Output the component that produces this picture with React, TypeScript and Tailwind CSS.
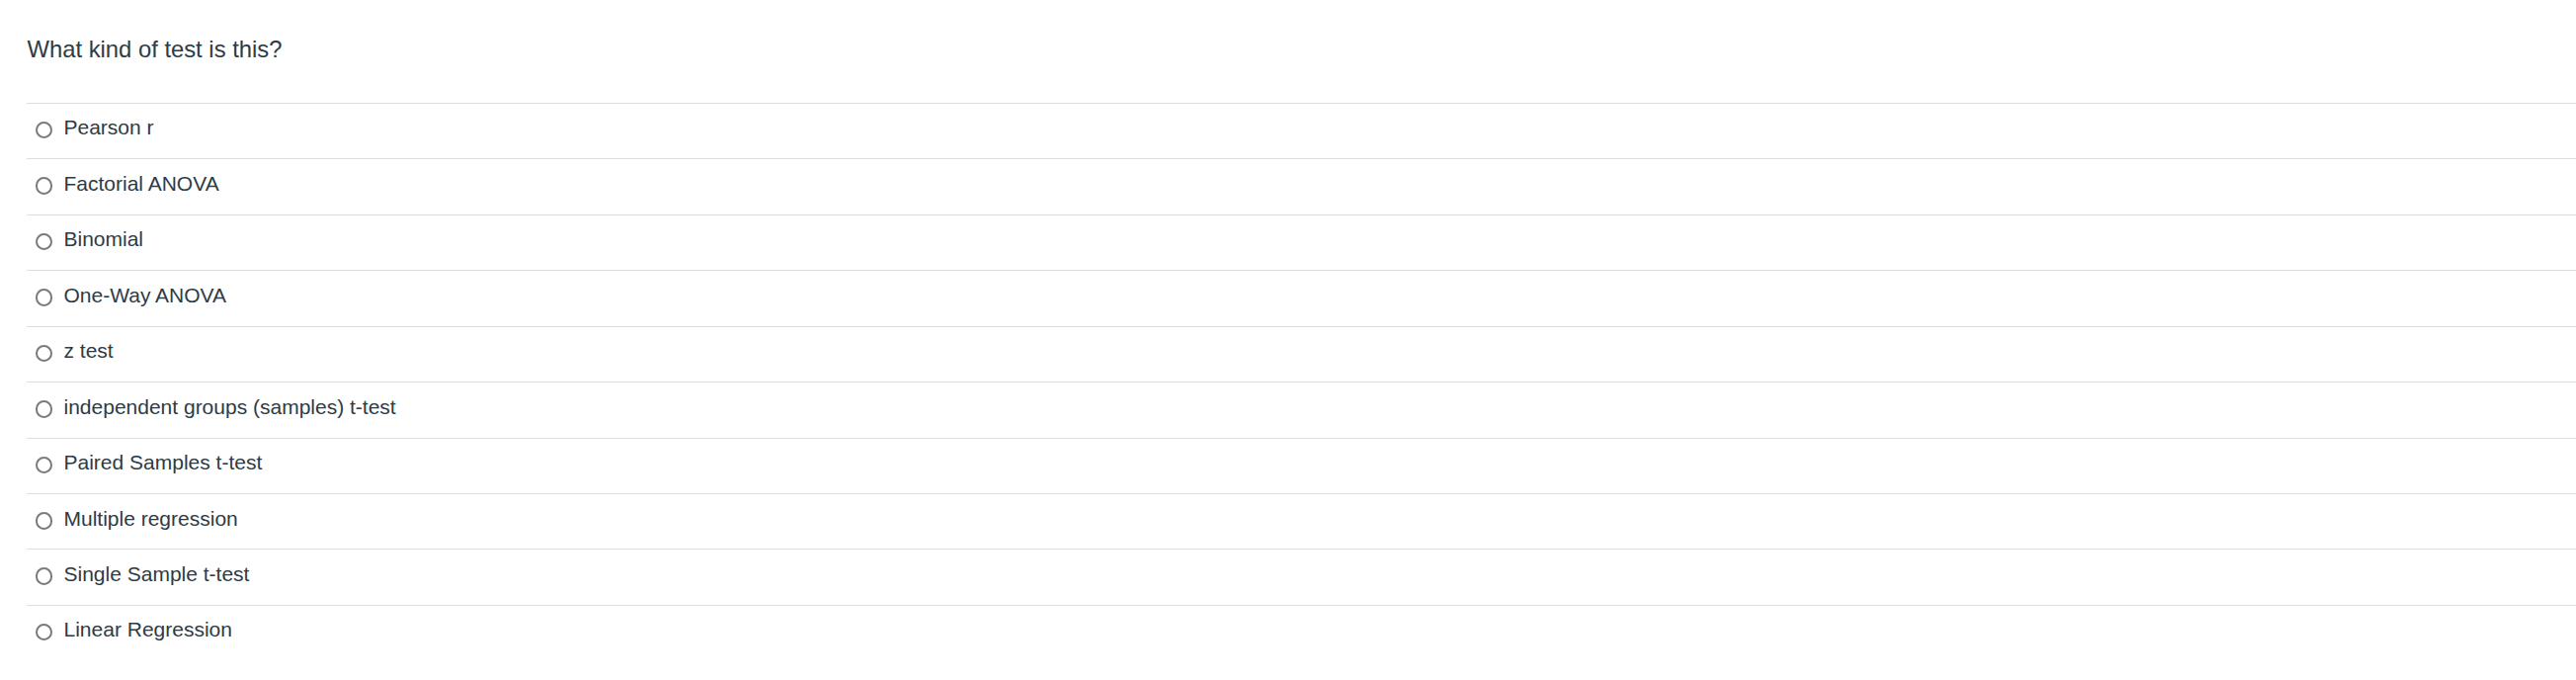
import React from "react";

const options = [
  "Pearson r",
  "Factorial ANOVA",
  "Binomial",
  "One-Way ANOVA",
  "z test",
  "independent groups (samples) t-test",
  "Paired Samples t-test",
  "Multiple regression",
  "Single Sample t-test",
  "Linear Regression",
];

export default function App() {
  return (
    <div
      className="w-full min-h-[688px] bg-white pl-[27px] pt-[35.8px] text-[#2d3b45]"
      style={{ fontFamily: '"Liberation Sans", Arial, sans-serif' }}
    >
      <div className="text-[23.8px] leading-[28px] mb-[40.2px] pl-[0.5px]">What kind of test is this?</div>
      <div>
        {options.map((o) => (
          <div
            key={o}
            className="flex items-start h-[56.44px] border-t border-[#dddddd] pt-[12.5px] pl-[8.5px] box-border"
          >
            <div className="mt-[5.5px] w-[17.5px] h-[17.5px] rounded-full border-2 border-[#7a7a7a] bg-white shrink-0 box-border" />
            <div className="ml-[11.5px] text-[21px] leading-[24px]">{o}</div>
          </div>
        ))}
      </div>
    </div>
  );
}
